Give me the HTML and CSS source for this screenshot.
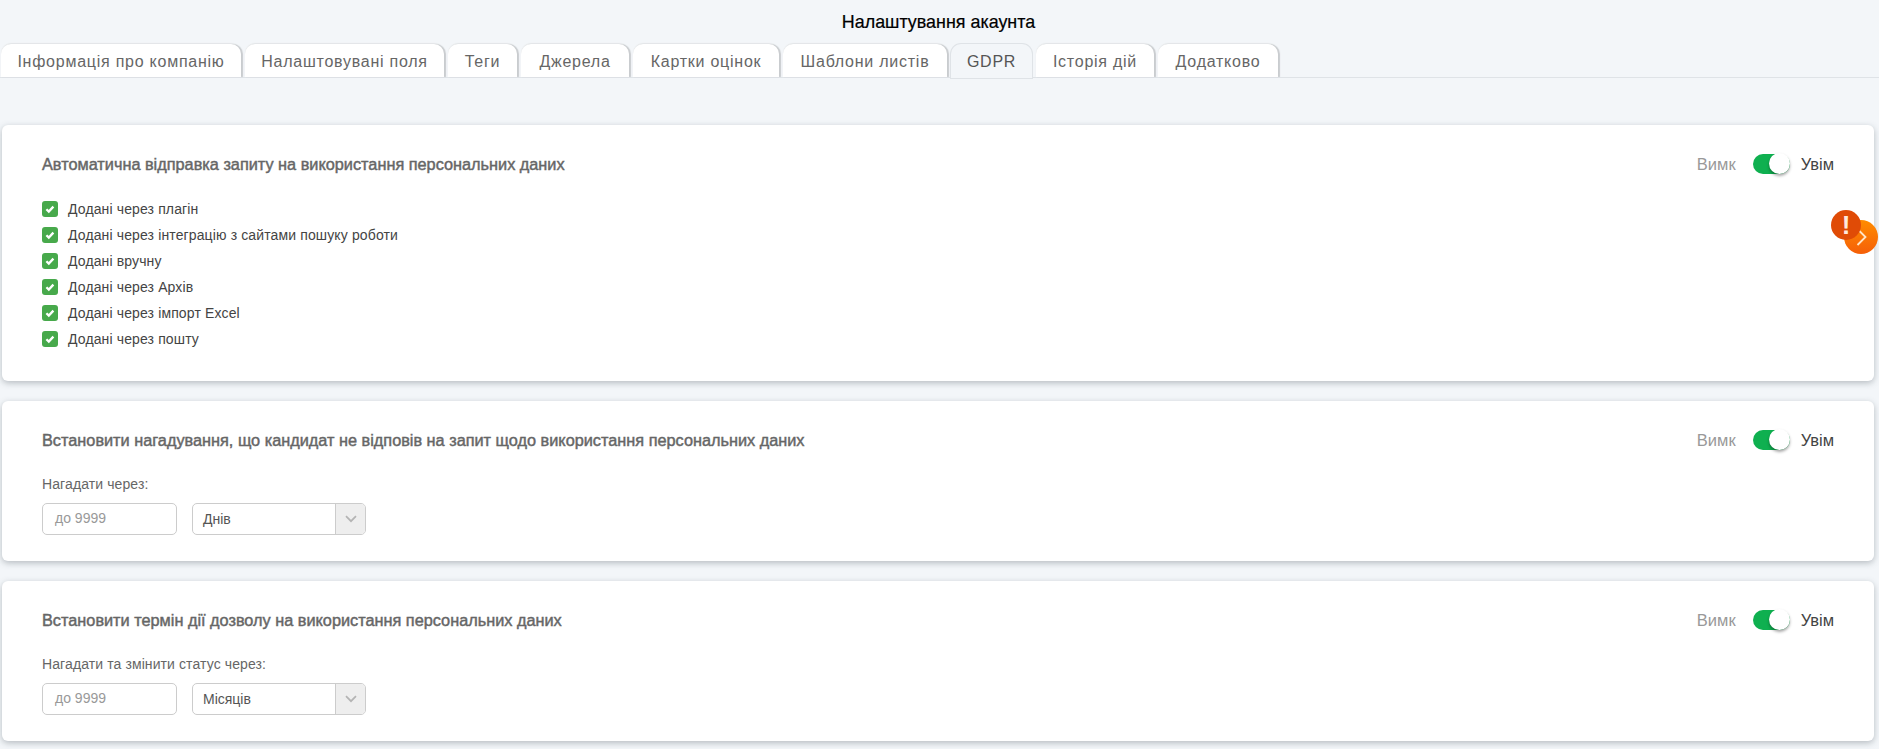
FILE: index.html
```html
<!DOCTYPE html>
<html lang="uk">
<head>
<meta charset="utf-8">
<title>Налаштування акаунта</title>
<link rel="stylesheet" href="styles.css">
</head>
<body>
<h1 class="page-title">Налаштування акаунта</h1>
<nav class="tabs">
  <a class="tab tab-1">Інформація про компанію</a>
  <a class="tab tab-2">Налаштовувані поля</a>
  <a class="tab tab-3">Теги</a>
  <a class="tab tab-4">Джерела</a>
  <a class="tab tab-5">Картки оцінок</a>
  <a class="tab tab-6">Шаблони листів</a>
  <a class="tab tab-7 active">GDPR</a>
  <a class="tab tab-8">Історія дій</a>
  <a class="tab tab-9">Додатково</a>
</nav>
<main class="cards">
  <section class="card card-list">
    <header class="card-head">
      <h2 class="card-title">Автоматична відправка запиту на використання персональних даних</h2>
      <div class="switch"><span class="off">Вимк</span><span class="toggle"><span class="knob"></span></span><span class="on">Увім</span></div>
    </header>
    <ul class="checks">
      <li class="check"><svg class="box" viewBox="0 0 16 16"><rect width="16" height="16" rx="3" fill="#47a94b"/><path d="M4.4 8.2l2.4 2.4 4.6-5" fill="none" stroke="#fff" stroke-width="2.3"/></svg>Додані через плагін</li>
      <li class="check"><svg class="box" viewBox="0 0 16 16"><rect width="16" height="16" rx="3" fill="#47a94b"/><path d="M4.4 8.2l2.4 2.4 4.6-5" fill="none" stroke="#fff" stroke-width="2.3"/></svg>Додані через інтеграцію з сайтами пошуку роботи</li>
      <li class="check"><svg class="box" viewBox="0 0 16 16"><rect width="16" height="16" rx="3" fill="#47a94b"/><path d="M4.4 8.2l2.4 2.4 4.6-5" fill="none" stroke="#fff" stroke-width="2.3"/></svg>Додані вручну</li>
      <li class="check"><svg class="box" viewBox="0 0 16 16"><rect width="16" height="16" rx="3" fill="#47a94b"/><path d="M4.4 8.2l2.4 2.4 4.6-5" fill="none" stroke="#fff" stroke-width="2.3"/></svg>Додані через Архів</li>
      <li class="check"><svg class="box" viewBox="0 0 16 16"><rect width="16" height="16" rx="3" fill="#47a94b"/><path d="M4.4 8.2l2.4 2.4 4.6-5" fill="none" stroke="#fff" stroke-width="2.3"/></svg>Додані через імпорт Excel</li>
      <li class="check"><svg class="box" viewBox="0 0 16 16"><rect width="16" height="16" rx="3" fill="#47a94b"/><path d="M4.4 8.2l2.4 2.4 4.6-5" fill="none" stroke="#fff" stroke-width="2.3"/></svg>Додані через пошту</li>
    </ul>
  </section>
  <section class="card card-form">
    <header class="card-head">
      <h2 class="card-title">Встановити нагадування, що кандидат не відповів на запит щодо використання персональних даних</h2>
      <div class="switch"><span class="off">Вимк</span><span class="toggle"><span class="knob"></span></span><span class="on">Увім</span></div>
    </header>
    <p class="field-label">Нагадати через:</p>
    <div class="fields">
      <div class="input">до 9999</div>
      <div class="select"><span class="select-value">Днів</span><span class="select-arrow"><svg viewBox="0 0 12 8" class="chev"><path d="M1 1.2l5 5 5-5" fill="none" stroke="#b4b4b4" stroke-width="1.7"/></svg></span></div>
    </div>
  </section>
  <section class="card card-form">
    <header class="card-head">
      <h2 class="card-title">Встановити термін дії дозволу на використання персональних даних</h2>
      <div class="switch"><span class="off">Вимк</span><span class="toggle"><span class="knob"></span></span><span class="on">Увім</span></div>
    </header>
    <p class="field-label">Нагадати та змінити статус через:</p>
    <div class="fields">
      <div class="input">до 9999</div>
      <div class="select"><span class="select-value">Місяців</span><span class="select-arrow"><svg viewBox="0 0 12 8" class="chev"><path d="M1 1.2l5 5 5-5" fill="none" stroke="#b4b4b4" stroke-width="1.7"/></svg></span></div>
    </div>
  </section>
</main>
<div class="float-next"><svg viewBox="0 0 34 34" class="float-icon"><path d="M13.5 9l8 8-8 8" fill="none" stroke="#ffe6c8" stroke-width="1.8"/></svg></div>
<div class="float-alert">!</div>
</body>
</html>
```
FILE: styles.css
```css
* { box-sizing: border-box; }
html, body { margin: 0; padding: 0; }
body {
  height: 749px;
  overflow: hidden;
  background: #f3f6f9;
  font-family: "Liberation Sans", Arial, sans-serif;
  color: #333;
}
.page-title {
  margin: 0;
  height: 44px;
  padding: 12px 2px 0 0;
  text-align: center;
  font-size: 17.9px;
  line-height: 20px;
  font-weight: 400;
  color: #000;
  -webkit-text-stroke: 0.2px #000;
}
.tabs {
  display: flex;
  gap: 4px;
  height: 34px;
  padding-left: 1px;
  border-bottom: 1px solid #dfe3e7;
}
.tab {
  height: 33px;
  flex: none;
  background: #fff;
  border-radius: 10px 10px 0 0;
  box-shadow: 1.5px 0 1px #c9cccf, 0 -1px 1px #e6e8ea;
  text-align: center;
  font-size: 16px;
  line-height: 26px;
  padding-top: 5px;
  letter-spacing: 0.75px;
  color: #666;
}
.tab-1 { width: 240px; }
.tab-2 { width: 199px; }
.tab-3 { width: 69px; }
.tab-4 { width: 108px; }
.tab-5 { width: 146px; }
.tab-6 { width: 164px; }
.tab-7 { width: 81px; }
.tab-8 { width: 118px; }
.tab-9 { width: 120px; }
.tab.active {
  background: #f3f6f9;
  color: #555;
  box-shadow: 0 0 0 1px #dfe3e7;
  height: 34px;
}
.cards {
  display: flex;
  flex-direction: column;
  gap: 20px;
  padding: 47px 5px 0 2px;
}
.card {
  background: #fff;
  border-radius: 6px;
  box-shadow: 0 2px 6px rgba(70, 80, 90, 0.35);
  padding: 28px 40px 0;
}
.card-list { height: 256px; }
.card-form { height: 160px; }
.card-head {
  display: flex;
  justify-content: space-between;
  align-items: center;
  height: 22px;
}
.card-title {
  margin: 0;
  font-size: 16.3px;
  font-weight: 400;
  color: #666;
  -webkit-text-stroke: 0.45px #666;
}
.switch {
  display: flex;
  align-items: center;
  font-size: 16.5px;
  margin-top: 0;
}
.off { color: #999; }
.on { color: #444; }
.toggle {
  position: relative;
  width: 37px;
  height: 20px;
  margin: 0 11px 0 17px;
  background: #0fb050;
  border-radius: 10px;
}
.knob {
  position: absolute;
  right: 0;
  top: -1px;
  width: 21px;
  height: 21px;
  border-radius: 50%;
  background: #fff;
  box-shadow: 0 2px 3px rgba(0, 0, 0, 0.35);
}
.checks {
  list-style: none;
  margin: 21px 0 0;
  padding: 0;
}
.check {
  display: flex;
  align-items: center;
  height: 26px;
  font-size: 14px;
  letter-spacing: 0.13px;
  color: #444;
}
.box {
  width: 16px;
  height: 16px;
  margin-right: 10px;
  flex: none;
}
.field-label {
  margin: 23px 0 0;
  font-size: 14px;
  letter-spacing: 0.1px;
  line-height: 20px;
  color: #666;
}
.fields {
  display: flex;
  gap: 15px;
  margin-top: 9px;
}
.input {
  width: 135px;
  height: 32px;
  padding-left: 12px;
  border: 1px solid #ccc;
  border-radius: 5px;
  font-size: 14px;
  line-height: 28px;
  color: #999;
}
.select {
  display: flex;
  width: 174px;
  height: 32px;
  border: 1px solid #ccc;
  border-radius: 5px;
  font-size: 14px;
  line-height: 30px;
  color: #555;
}
.select-value {
  flex: 1;
  padding-left: 10px;
}
.select-arrow {
  display: flex;
  align-items: center;
  justify-content: center;
  width: 30px;
  background: #eee;
  border-left: 1px solid #ccc;
  border-radius: 0 4px 4px 0;
}
.chev { width: 12px; height: 8px; }
.float-next {
  position: absolute;
  left: 1844px;
  top: 220px;
  width: 34px;
  height: 34px;
  border-radius: 50%;
  background: linear-gradient(180deg, #ff8c00, #f55f08);
}
.float-icon { display: block; width: 34px; height: 34px; }
.float-alert {
  position: absolute;
  left: 1831px;
  top: 210px;
  width: 30px;
  height: 30px;
  border-radius: 50%;
  background: #e04b06;
  color: #ffe9dc;
  text-align: center;
  font-size: 26px;
  line-height: 30px;
  font-weight: 700;
}
```
